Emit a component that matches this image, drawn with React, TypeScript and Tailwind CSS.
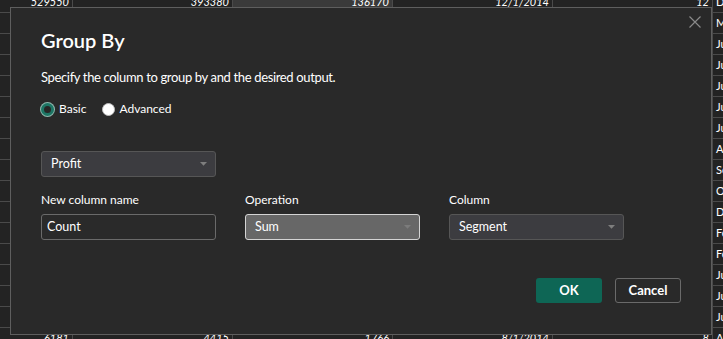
import React from 'react';

type Row = { a: string; b: string; c: string; d: string; e: string; m: string };

const months = [
  'December', 'March', 'June', 'June', 'June', 'June', 'July', 'August', 'September',
  'October', 'December', 'February', 'February', 'June', 'June', 'July', 'August',
];

const rows: Row[] = months.map((m, i) => {
  if (i === 0) return { a: '529550', b: '393380', c: '136170', d: '12/1/2014', e: '12', m };
  if (i === months.length - 1) return { a: '6181', b: '4415', c: '1766', d: '8/1/2014', e: '8', m };
  return { a: '', b: '', c: '', d: '', e: '', m };
});

function Caret({ className }: { className: string }) {
  return (
    <svg width="7" height="4" viewBox="0 0 7 4" className={className}>
      <path d="M0 0 L7 0 L3.5 3.8 Z" fill="currentColor" />
    </svg>
  );
}

function Grid() {
  return (
    <div className="-mt-[8px] flex flex-col">
      {rows.map((r, i) => (
        <div key={i} className="flex h-[21px] border-b border-[#4a4a4a] text-[11px] italic text-white">
          <div className="w-[73px] shrink-0 border-r border-[#4a4a4a] pr-[3px] text-right leading-[20px]">{r.a}</div>
          <div className="w-[160px] shrink-0 border-r border-[#4a4a4a] pr-[3px] text-right leading-[20px]">{r.b}</div>
          <div className={`w-[160px] shrink-0 border-r border-[#4a4a4a] pr-[3px] text-right leading-[20px] ${i === 0 ? 'bg-[#3a3a3a]' : ''}`}>{r.c}</div>
          <div className="w-[160px] shrink-0 border-r border-[#4a4a4a] pr-[3px] text-right leading-[20px]">{r.d}</div>
          <div className="w-[160px] shrink-0 border-r border-[#4a4a4a] pr-[3px] text-right leading-[20px]">{r.e}</div>
          <div className="w-[120px] shrink-0 pl-[3px] not-italic leading-[20px]">{r.m}</div>
        </div>
      ))}
    </div>
  );
}

function Select({ value, active }: { value: string; active?: boolean }) {
  return (
    <div
      className={`flex h-[26px] w-[175px] items-center justify-between rounded-[3px] border pl-[9px] pr-[8px] text-[12.5px] text-white ${
        active ? 'border-[#d4d4d4] bg-[#676767]' : 'border-[#565656] bg-[#3c3c40]'
      }`}
    >
      <span>{value}</span>
      <Caret className={active ? 'text-[#7c7c7c]' : 'text-[#7e7e7e]'} />
    </div>
  );
}

export default function App() {
  return (
    <div
      className="relative h-[339px] w-[723px] overflow-hidden bg-[#232323]"
      style={{ fontFamily: 'Lato, "Open Sans", sans-serif' }}
    >
      <Grid />

      {/* Group By dialog */}
      <div className="absolute left-[10px] top-[7px] h-[328px] w-[702px] border border-[#5e5e5e] bg-[#292929] pl-[30px] pr-[30px] pt-[18px] text-white">
        <button className="absolute right-[10px] top-[8px] text-[#8a8a8a]">
          <svg width="12" height="12" viewBox="0 0 12 12">
            <path d="M0.5 0.5 L11.5 11.5 M11.5 0.5 L0.5 11.5" stroke="currentColor" strokeWidth="1.2" />
          </svg>
        </button>

        <h2 className="text-[20px] font-semibold leading-[28px]">Group By</h2>
        <p className="mt-[13px] text-[13px] leading-[20px] tracking-[-0.35px]">
          Specify the column to group by and the desired output.
        </p>

        <div className="mt-[12px] flex items-center text-[12px] leading-[20px]">
          <span className="h-[13px] w-[13px] rounded-full border-[3px] border-[#1d7564] bg-[#262626] ring-1 ring-[#8fb8ae]" />
          <span className="ml-[5px]">Basic</span>
          <span className="ml-[16px] h-[13px] w-[13px] rounded-full border border-[#bdbdbd] bg-white" />
          <span className="ml-[4px]">Advanced</span>
        </div>

        <div className="mt-[32px]">
          <Select value="Profit" />
        </div>

        <div className="mt-[13px] flex gap-[29px] text-[12px]">
          <div className="flex w-[175px] flex-col">
            <span className="leading-[20px]">New column name</span>
            <div className="mt-[4px] flex h-[26px] items-center rounded-[3px] border border-[#6a6a6a] bg-[#2a2a2a] pl-[5px] text-[12.5px]">
              Count
            </div>
          </div>
          <div className="flex w-[175px] flex-col">
            <span className="leading-[20px]">Operation</span>
            <div className="mt-[4px]">
              <Select value="Sum" active />
            </div>
          </div>
          <div className="flex w-[175px] flex-col">
            <span className="leading-[20px]">Column</span>
            <div className="mt-[4px]">
              <Select value="Segment" />
            </div>
          </div>
        </div>

        <div className="mt-[38px] flex justify-end gap-[13px] text-[13px] font-bold">
          <button className="h-[25px] w-[66px] rounded-[3px] bg-[#0e6655]">OK</button>
          <button className="h-[25px] w-[66px] rounded-[3px] border border-[#6a6a6a]">Cancel</button>
        </div>
      </div>
    </div>
  );
}
